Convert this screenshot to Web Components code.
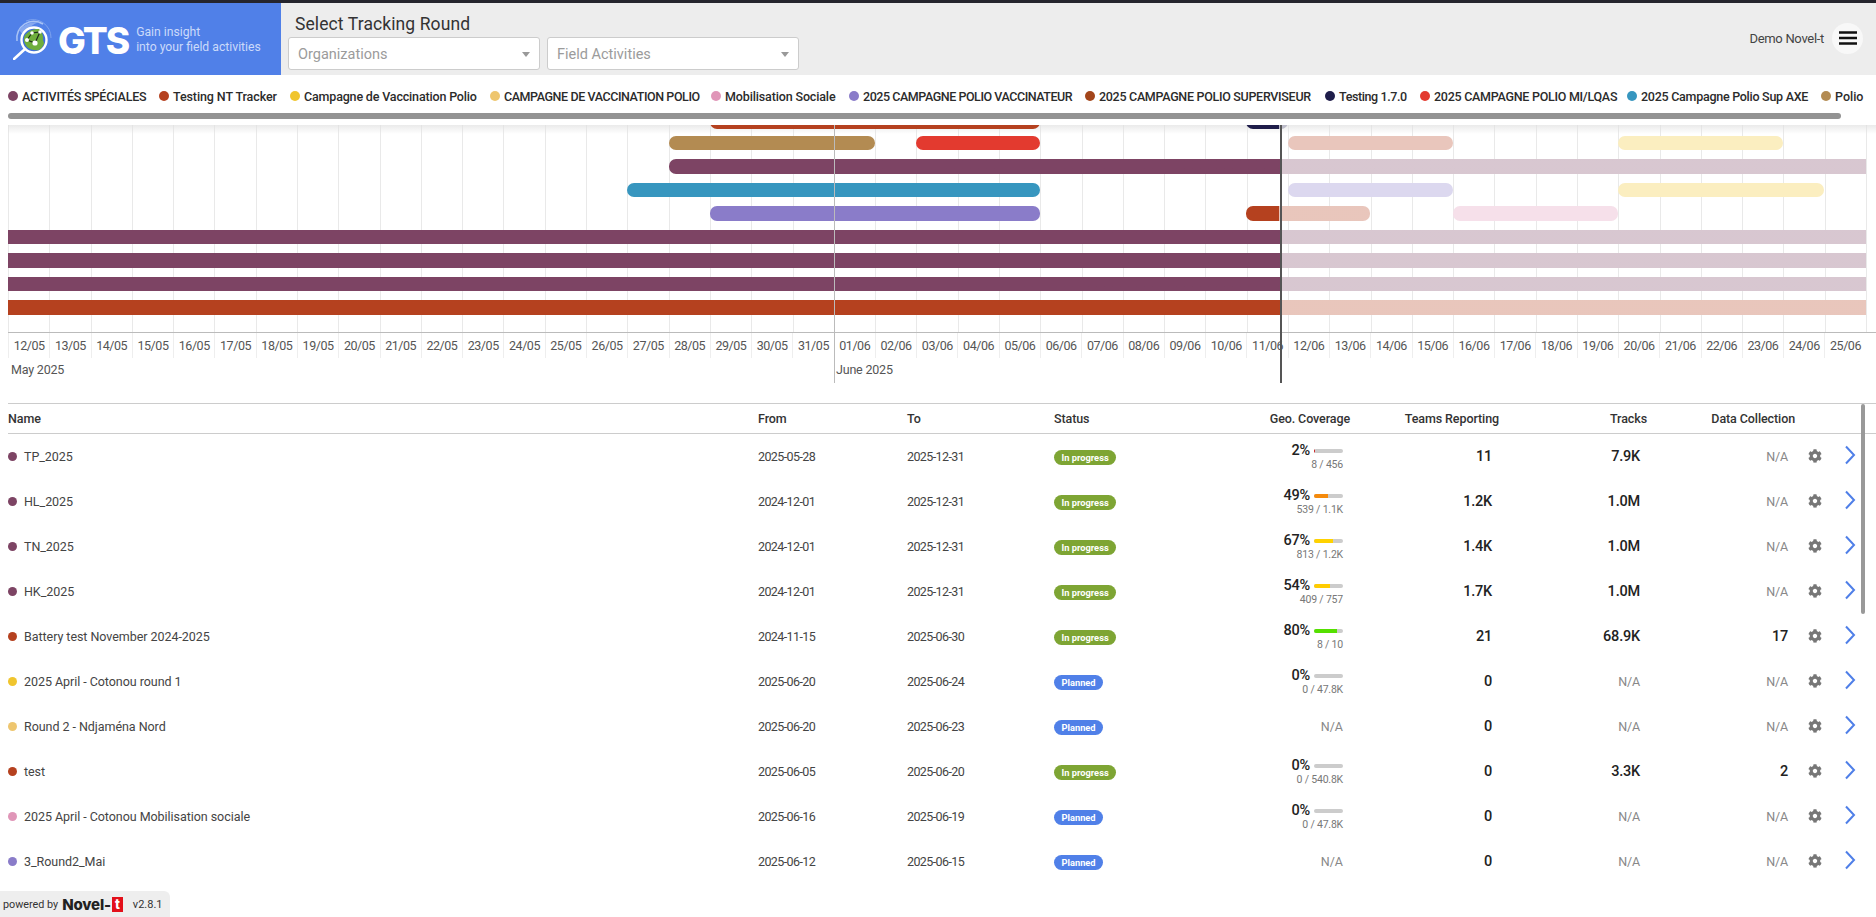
<!DOCTYPE html>
<html>
<head>
<meta charset="utf-8">
<title>GTS</title>
<style>
  html, body { margin: 0; height: 100%; overflow: hidden; background: #fff; }
  body { font-family: Roboto, "Liberation Sans", sans-serif; color: #333; display: flex; flex-direction: column; height: 917px; }
</style>
</head>
<body>
<gts-header></gts-header>
<gts-legend></gts-legend>
<gts-gantt></gts-gantt>
<gts-table></gts-table>
<gts-footer></gts-footer>

<script>
const COLORS = {
  purple: '#7d4464', brown: '#b5411f', yellow: '#f0c52e', sand: '#eec66f', pink: '#e096b8',
  lavender: '#8a7cc9', rust: '#a3451a', navy: '#1f1d4a', red: '#e33a2f', blue: '#3796bf', tan: '#b38b52'
};

customElements.define('gts-header', class extends HTMLElement {
  constructor() {
    super();
    this.attachShadow({ mode: 'open' }).innerHTML = `
    <style>
      :host { display: flex; height: 72px; margin-top: 3px; background: #ededed; box-shadow: 0 -3px 0 #25252d; }
      .brand { width: 281px; background: #5080e8; display: flex; align-items: center; padding-left: 13px; box-sizing: border-box; color: #fff; }
      .gts { font: 800 37px/1 Inter, Roboto, sans-serif; letter-spacing: -2px; margin: 2px 8px 0 5px; }
      .tag { font-size: 12.2px; line-height: 15px; color: #cbdafa; margin-top: 2px; }
      .mid { padding: 12px 0 0 7px; flex: 1; }
      h1 { font: 400 17.5px/18px Roboto, sans-serif; margin: 0 0 4px 7px; color: #333; letter-spacing: .1px; }
      .selects { display: flex; gap: 7px; }
      .sel { width: 252px; height: 33px; box-sizing: border-box; background: #fff; border: 1px solid #ccc; border-radius: 3px; display: flex; align-items: center; justify-content: space-between; padding: 1px 9px 0; color: #9b9b9b; font-size: 14.5px; }
      .sel i { border: 4px solid transparent; border-top: 5px solid #999; border-bottom: 0; }
      .user { display: flex; align-items: center; gap: 8px; padding: 0 13px 0 0; height: 70px; font-size: 13px; color: #444; letter-spacing: -.3px; }
      .burger { width: 31px; height: 31px; border-radius: 50%; background: #f8f8f8; display: flex; align-items: center; justify-content: center; }
    </style>
    <div class="brand">
      <svg width="40" height="42" viewBox="0 0 40 42">
        <path d="M4 23 A17 17 0 0 1 30 6" fill="none" stroke="#a9c3f5" stroke-width="1.5"/>
        <path d="M13 3 A18 18 0 0 1 38 20" fill="none" stroke="#7ea3ee" stroke-width="1"/>
        <path d="M6 12 Q14 3 26 4 Q14 8 11 18Z" fill="#86a8ef"/>
        <circle cx="21" cy="22" r="12.5" fill="#3f6fd8" stroke="#fff" stroke-width="2.4"/>
        <path d="M12 17 Q18 10 26 11 Q31 16 30 22 Q33 27 26 32 Q19 33 14 29 Q9 23 12 17Z" fill="#6fae3c"/>
        <path d="M1 41 L12 31" stroke="#fff" stroke-width="2.6" stroke-linecap="round"/>
        <path d="M14 22 L22 25 L27 14 L19 15 L14 22" fill="none" stroke="#1d2a1a" stroke-width="1.2"/>
        <circle cx="14" cy="22" r="2" fill="#fff"/><circle cx="22" cy="25" r="2.6" fill="#fff"/>
        <circle cx="19" cy="15" r="1.8" fill="#fff"/><circle cx="27" cy="14" r="1.8" fill="#fff"/>
      </svg>
      <span class="gts">GTS</span>
      <span class="tag">Gain insight<br>into your field activities</span>
    </div>
    <div class="mid">
      <h1>Select Tracking Round</h1>
      <div class="selects">
        <div class="sel">Organizations<i></i></div>
        <div class="sel">Field Activities<i></i></div>
      </div>
    </div>
    <div class="user">
      <span>Demo Novel-t</span>
      <span class="burger">
        <svg width="18" height="14" viewBox="0 0 18 14"><path d="M0 1.5H18M0 7H18M0 12.5H18" stroke="#111" stroke-width="2.4"/></svg>
      </span>
    </div>`;
  }
});

customElements.define('gts-legend', class extends HTMLElement {
  constructor() {
    super();
    // name, colour, item width, letter spacing
    const items = [
      ['ACTIVITÉS SPÉCIALES', 'purple', 151, -.2], ['Testing NT Tracker', 'brown', 131, -.1], ['Campagne de Vaccination Polio', 'yellow', 200, -.17],
      ['CAMPAGNE DE VACCINATION POLIO', 'sand', 221, -.42], ['Mobilisation Sociale', 'pink', 138, -.14], ['2025 CAMPAGNE POLIO VACCINATEUR', 'lavender', 236, -.45],
      ['2025 CAMPAGNE POLIO SUPERVISEUR', 'rust', 240, -.3], ['Testing 1.7.0', 'navy', 95, -.4], ['2025 CAMPAGNE POLIO MI/LQAS', 'red', 207, -.27],
      ['2025 Campagne Polio Sup AXE', 'blue', 194, -.27], ['Polio', 'tan', 60, 0]
    ];
    this.attachShadow({ mode: 'open' }).innerHTML = `
    <style>
      :host { display: block; height: 50px; padding: 0 0 0 8px; box-sizing: border-box; overflow: hidden; position: relative; }
      .list { display: flex; height: 42px; align-items: center; white-space: nowrap; font-size: 12.5px; font-weight: 500; color: #2b2b2b; }
      .it { flex: none; display: flex; align-items: center; gap: 4px; }
      .it i { width: 10px; height: 10px; border-radius: 50%; flex: none; }
      .bar { height: 6px; width: 1833px; border-radius: 3px; background: #939393; margin-top: -4px; }
    </style>
    <div class="list">${items.map(i => `<span class="it" style="width:${i[2]}px;letter-spacing:${i[3]}px"><i style="background:${COLORS[i[1]]}"></i>${i[0]}</span>`).join('')}</div>
    <div class="bar"></div>`;
  }
});

customElements.define('gts-gantt', class extends HTMLElement {
  constructor() {
    super();
    const DAY = 41.29, TODAY = 30.8;
    const rows = [
      [[17, 25, 'brown'], [30, 31, 'navy']],
      [[16, 21, 'tan'], [22, 25, 'red'], [31, 35, 'brown'], [39, 43, 'yellow']],
      [[16, 45, 'purple', 'r']],
      [[15, 25, 'blue'], [31, 35, 'lavender'], [39, 44, 'yellow']],
      [[17, 25, 'lavender'], [30, 33, 'brown'], [35, 39, 'pink']],
      [[0, 45, 'purple', 'lr']],
      [[0, 45, 'purple', 'lr']],
      [[0, 45, 'purple', 'lr']],
      [[0, 45, 'brown', 'lr']]
    ];
    const bar = ([from, to, c, sq]) => {
      const col = COLORS[c], pale = `color-mix(in srgb, ${col} 30%, white)`;
      const cut = (TODAY - from) * DAY;
      const bg = to <= TODAY ? col : from >= TODAY ? pale : `linear-gradient(to right, ${col} ${cut}px, ${pale} ${cut}px)`;
      const l = (sq || '').includes('l') ? 0 : 7;
      const r = (sq || '').includes('r') ? 0 : 7;
      return `<div class="bar" style="grid-column:${from + 1}/${to + 1};background:${bg};border-radius:${l}px ${r}px ${r}px ${l}px"></div>`;
    };
    const days = [];
    for (let d = 12; d <= 31; d++) days.push(d + '/05');
    for (let d = 1; d <= 25; d++) days.push(String(d).padStart(2, '0') + '/06');
    this.attachShadow({ mode: 'open' }).innerHTML = `
    <style>
      :host { display: block; height: 258px; position: relative; padding-left: 8px; flex: none; --day: ${DAY}px; }
      .plot { height: 208px; overflow: hidden; position: relative; border-bottom: 1px solid #bbb; box-sizing: border-box;
        background: repeating-linear-gradient(to right, #e9e9e9 0 1px, transparent 1px var(--day)); }
      .plot::before { content: ''; position: absolute; left: 0; right: 0; top: 0; height: 9px;
        background: linear-gradient(#e0e0e0aa, #fff0); }
      .rows { margin-top: -13.5px; position: relative; }
      .row { display: grid; grid-template-columns: repeat(45, var(--day)); height: 23.5px; align-items: center; }
      .row:first-child { height: 19.5px; }
      .bar { height: 14.5px; }
      .days { display: grid; grid-template-columns: repeat(45, var(--day)); height: 24px; }
      .days span { border-left: 1px solid #eee; box-sizing: border-box; font-size: 12.5px; letter-spacing: -.45px; color: #555; text-align: center; line-height: 25px; white-space: nowrap; }
      .months { font-size: 12.5px; color: #555; display: flex; padding-top: 5px; letter-spacing: -.2px; }
      .months span:first-child { width: 826px; padding-left: 3px; box-sizing: border-box; }
      .months span:last-child { padding-left: 2px; }
      .june, .today { position: absolute; top: 0; bottom: 0; width: 1px; }
      .june { left: 834px; background: #bbb; }
      .today { left: 1280px; background: #555; width: 1.5px; z-index: 3; }
    </style>
    <div class="plot"><div class="rows">${rows.map(r => `<div class="row">${r.map(bar).join('')}</div>`).join('')}</div></div>
    <div class="days">${days.map(d => `<span>${d}</span>`).join('')}</div>
    <div class="months"><span>May 2025</span><span>June 2025</span></div>
    <div class="june"></div><div class="today"></div>`;
  }
});

customElements.define('gts-badge', class extends HTMLElement {
  constructor() {
    super();
    this.attachShadow({ mode: 'open' }).innerHTML = `
    <style>
      :host { display: inline-block; height: 15px; line-height: 15px; padding: 0 7.5px; border-radius: 8px; color: #fff; font-size: 9.3px; font-weight: 700; background: #7ea534; }
      :host([kind=planned]) { background: #5080e8; }
    </style><slot></slot>`;
  }
});

customElements.define('gts-coverage', class extends HTMLElement {
  constructor() {
    super();
    const pct = +this.getAttribute('pct');
    const c = pct >= 75 ? '#55e000' : pct >= 50 && pct < 60 ? '#ffcc00' : pct >= 50 ? '#ffd200' : pct >= 10 ? '#f58a0b' : '#cc1111';
    this.attachShadow({ mode: 'open' }).innerHTML = `
    <style>
      :host { display: block; text-align: right; line-height: 1; padding-top: 1px; }
      .top { display: flex; justify-content: flex-end; align-items: center; gap: 4px; font-size: 14.5px; font-weight: 500; color: #222; letter-spacing: -.2px; }
      .track { width: 29px; height: 4.5px; border-radius: 2px; background: #ccc; overflow: hidden; }
      .track i { display: block; height: 100%; background: ${c}; width: ${pct}%; }
      .sub { font-size: 10.5px; color: #777; margin-top: 2px; letter-spacing: -.2px; }
    </style>
    <div class="top">${pct}%<div class="track"><i></i></div></div>
    <div class="sub"><slot></slot></div>`;
  }
});

const GRID = `display: grid; grid-template-columns: 750px 149px 147px 200px 96px 149px 148px 148px 39px 31px; align-items: center;`;

customElements.define('gts-row', class extends HTMLElement {
  constructor() {
    super();
    const a = n => this.getAttribute(n);
    const val = v => v === 'N/A' ? `<span class="na">N/A</span>` : `<b>${v}</b>`;
    const planned = a('status') === 'Planned';
    const geo = a('pct') === null ? `<span class="na geo">N/A</span>` : `<gts-coverage pct="${a('pct')}">${a('sub')}</gts-coverage>`;
    this.attachShadow({ mode: 'open' }).innerHTML = `
    <style>
      :host { ${GRID} height: 45px; font-size: 12.5px; color: #444; }
      .name { display: flex; align-items: center; gap: 7px; letter-spacing: -.05px; }
      .name i { width: 9px; height: 9px; border-radius: 50%; background: ${a('color')}; }
      .date { letter-spacing: -.6px; }
      .r { text-align: right; font-size: 14.5px; padding-right: 7px; letter-spacing: -.2px; }
      b { font-weight: 500; color: #222; }
      .na { color: #888; font-size: 12.5px; }
      .geo { display: block; text-align: right; }
      .cov { padding-right: 7px; margin-left: -100px; }
      svg { display: block; margin: 0 auto; }
      .gear { margin-top: -2px; }
      .chev { margin-top: -4px; }
    </style>
    <div class="name"><i></i>${a('name')}</div>
    <div class="date">${a('from')}</div>
    <div class="date">${a('to')}</div>
    <div><gts-badge ${planned ? 'kind="planned"' : ''}>${a('status')}</gts-badge></div>
    <div class="cov">${geo}</div>
    <div class="r">${val(a('teams'))}</div>
    <div class="r">${val(a('tracks'))}</div>
    <div class="r">${val(a('data'))}</div>
    <div><svg class="gear" width="14" height="14" viewBox="0 0 512 512"><path fill="#777" d="M487.4 315.7l-42.6-24.6c4.3-23.2 4.3-47 0-70.2l42.6-24.6c4.9-2.8 7.1-8.6 5.5-14-11.1-35.6-30-67.8-54.7-94.6-3.8-4.1-10-5.1-14.8-2.3L380.8 110c-17.9-15.4-38.5-27.3-60.8-35.1V25.8c0-5.6-3.9-10.5-9.4-11.7-36.7-8.2-74.3-7.8-109.2 0-5.5 1.2-9.4 6.1-9.4 11.7V75c-22.2 7.9-42.8 19.8-60.8 35.1L88.7 85.5c-4.9-2.8-11-1.9-14.8 2.3-24.7 26.7-43.6 58.9-54.7 94.6-1.7 5.4.6 11.2 5.5 14L67.3 221c-4.3 23.2-4.3 47 0 70.2l-42.6 24.6c-4.9 2.8-7.1 8.6-5.5 14 11.1 35.6 30 67.8 54.7 94.6 3.8 4.1 10 5.1 14.8 2.3l42.6-24.6c17.9 15.4 38.5 27.3 60.8 35.1v49.2c0 5.6 3.9 10.5 9.4 11.7 36.7 8.2 74.3 7.8 109.2 0 5.5-1.2 9.4-6.1 9.4-11.7v-49.2c22.2-7.9 42.8-19.8 60.8-35.1l42.6 24.6c4.9 2.8 11 1.9 14.8-2.3 24.7-26.7 43.6-58.9 54.7-94.6 1.5-5.5-.7-11.3-5.6-14.1zM256 336c-44.1 0-80-35.9-80-80s35.9-80 80-80 80 35.9 80 80-35.9 80-80 80z"/></svg></div>
    <div><svg class="chev" width="12" height="20" viewBox="0 0 12 20"><path d="M2 1.5L10 10L2 18.5" fill="none" stroke="#4f7fe8" stroke-width="2"/></svg></div>`;
  }
});

customElements.define('gts-table', class extends HTMLElement {
  constructor() {
    super();
    const C = COLORS;
    const data = [
      { name: 'TP_2025', color: C.purple, from: '2025-05-28', to: '2025-12-31', status: 'In progress', pct: 2, sub: '8 / 456', teams: '11', tracks: '7.9K', data: 'N/A' },
      { name: 'HL_2025', color: C.purple, from: '2024-12-01', to: '2025-12-31', status: 'In progress', pct: 49, sub: '539 / 1.1K', teams: '1.2K', tracks: '1.0M', data: 'N/A' },
      { name: 'TN_2025', color: C.purple, from: '2024-12-01', to: '2025-12-31', status: 'In progress', pct: 67, sub: '813 / 1.2K', teams: '1.4K', tracks: '1.0M', data: 'N/A' },
      { name: 'HK_2025', color: C.purple, from: '2024-12-01', to: '2025-12-31', status: 'In progress', pct: 54, sub: '409 / 757', teams: '1.7K', tracks: '1.0M', data: 'N/A' },
      { name: 'Battery test November 2024-2025', color: C.brown, from: '2024-11-15', to: '2025-06-30', status: 'In progress', pct: 80, sub: '8 / 10', teams: '21', tracks: '68.9K', data: '17' },
      { name: '2025 April - Cotonou round 1', color: C.yellow, from: '2025-06-20', to: '2025-06-24', status: 'Planned', pct: 0, sub: '0 / 47.8K', teams: '0', tracks: 'N/A', data: 'N/A' },
      { name: 'Round 2 - Ndjaména Nord', color: C.sand, from: '2025-06-20', to: '2025-06-23', status: 'Planned', teams: '0', tracks: 'N/A', data: 'N/A' },
      { name: 'test', color: C.brown, from: '2025-06-05', to: '2025-06-20', status: 'In progress', pct: 0, sub: '0 / 540.8K', teams: '0', tracks: '3.3K', data: '2' },
      { name: '2025 April - Cotonou Mobilisation sociale', color: C.pink, from: '2025-06-16', to: '2025-06-19', status: 'Planned', pct: 0, sub: '0 / 47.8K', teams: '0', tracks: 'N/A', data: 'N/A' },
      { name: '3_Round2_Mai', color: C.lavender, from: '2025-06-12', to: '2025-06-15', status: 'Planned', teams: '0', tracks: 'N/A', data: 'N/A' }
    ];
    const attrs = r => Object.entries(r).map(([k, v]) => `${k}="${v}"`).join(' ');
    this.attachShadow({ mode: 'open' }).innerHTML = `
    <style>
      :host { display: block; flex: 1; min-height: 0; margin: 20px 0 0 8px; border-top: 1px solid #ccc; position: relative; overflow: hidden; }
      .head { ${GRID} height: 29px; border-bottom: 1px solid #ccc; font-size: 12.5px; font-weight: 500; color: #333; letter-spacing: -.1px; }
      .head .right { text-align: right; }
      .head .geo { margin-left: -100px; }
      .thumb { position: absolute; right: 11px; top: 0; width: 4.5px; height: 210px; background: #999; border-radius: 2px; }
    </style>
    <div class="head">
      <div>Name</div><div>From</div><div>To</div><div>Status</div>
      <div class="right geo">Geo. Coverage</div>
      <div class="right">Teams Reporting</div><div class="right">Tracks</div><div class="right">Data Collection</div>
    </div>
    ${data.map(r => `<gts-row ${attrs(r)}></gts-row>`).join('')}
    <div class="thumb"></div>`;
  }
});

customElements.define('gts-footer', class extends HTMLElement {
  constructor() {
    super();
    this.attachShadow({ mode: 'open' }).innerHTML = `
    <style>
      :host { position: absolute; left: 0; bottom: 0; width: 170px; height: 26px; background: #eee; border-top-right-radius: 6px; display: flex; align-items: center; padding-left: 3px; box-sizing: border-box; font-size: 10.8px; color: #333; white-space: nowrap; }
      .logo { font: 800 15px/1 Inter, sans-serif; color: #222; margin-left: 4px; display: flex; align-items: center; letter-spacing: -.2px; }
      .t { background: #e3101a; color: #fff; font-size: 13px; width: 11px; height: 15px; line-height: 15px; text-align: center; margin-left: 1px; display: inline-block; letter-spacing: 0; }
      .ver { margin-left: 10px; font-size: 11px; }
    </style>
    powered by <span class="logo">Novel-<span class="t">t</span></span><span class="ver">v2.8.1</span>`;
  }
});
</script>
</body>
</html>
